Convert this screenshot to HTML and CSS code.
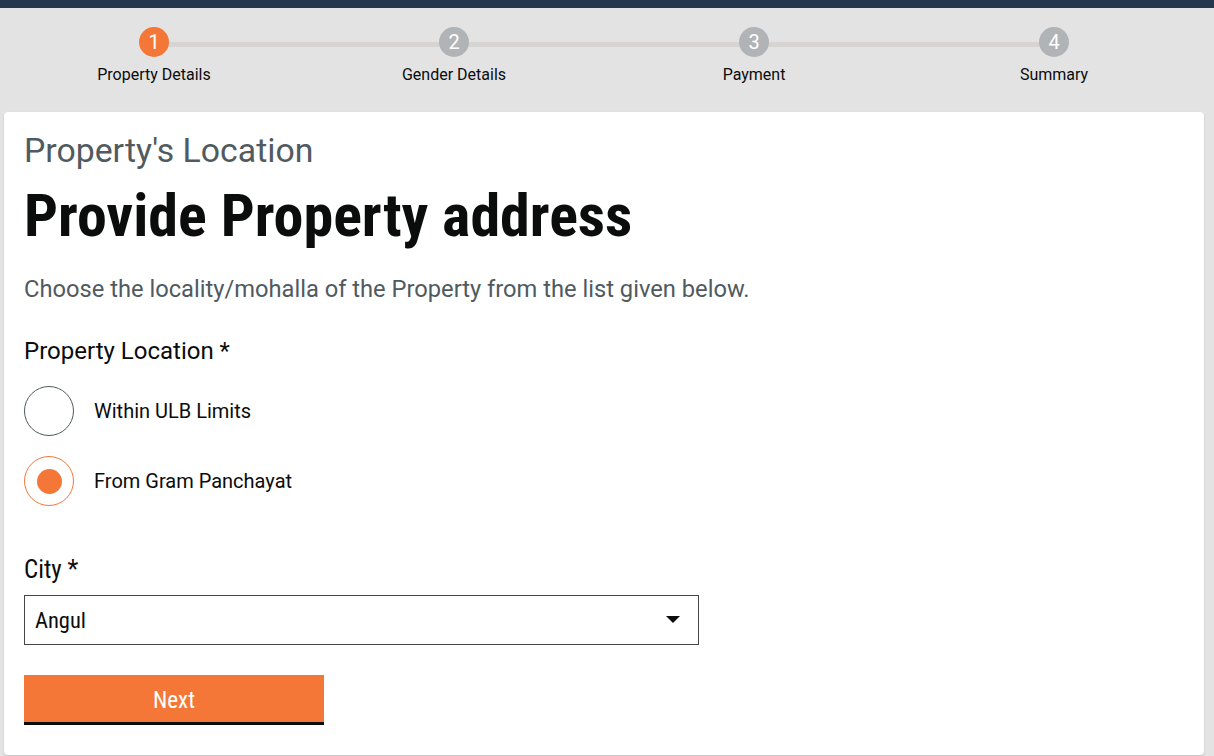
FILE: index.html
```html
<!DOCTYPE html>
<html lang="en">
<head>
<meta charset="utf-8">
<title>Property Details</title>
<link rel="stylesheet" href="styles.css">
</head>
<body>
<div class="topbar"></div>
<div class="page">
  <ol class="stepper">
    <li class="step active"><span class="dot">1</span><span class="step-label">Property Details</span></li>
    <li class="step"><span class="dot">2</span><span class="step-label">Gender Details</span></li>
    <li class="step"><span class="dot">3</span><span class="step-label">Payment</span></li>
    <li class="step last"><span class="dot">4</span><span class="step-label">Summary</span></li>
  </ol>
  <main class="card">
    <div class="caption">Property's Location</div>
    <h1 class="title">Provide Property address</h1>
    <p class="hint">Choose the locality/mohalla of the Property from the list given below.</p>
    <div class="field-label">Property Location *</div>
    <div class="radios">
      <label class="radio"><span class="circle"></span><span class="radio-text">Within ULB Limits</span></label>
      <label class="radio checked"><span class="circle"><span class="inner"></span></span><span class="radio-text">From Gram Panchayat</span></label>
    </div>
    <div class="field-label city">City *</div>
    <div class="select">
      <span class="select-value">Angul</span>
      <svg class="caret" width="14" height="7" viewBox="0 0 14 7"><path d="M0 0h14L7 7z" fill="#0b0c0c"/></svg>
    </div>
    <button class="btn">Next</button>
  </main>
</div>
</body>
</html>
```
FILE: styles.css
```css
* { box-sizing: border-box; }
html, body { margin: 0; padding: 0; }
body {
  background: #e3e3e3;
  font-family: Roboto, "Liberation Sans", sans-serif;
  color: #0b0c0c;
  width: 1214px;
  height: 756px;
  overflow: hidden;
}
.topbar { height: 8px; background: #22384d; }
.page { width: 1200px; margin-left: 4px; }
.stepper {
  list-style: none;
  margin: 0;
  padding: 19px 0 0;
  display: grid;
  grid-template-columns: repeat(4, 300px);
  height: 104px;
}
.step {
  position: relative;
  display: flex;
  flex-direction: column;
  align-items: center;
}
.step::after {
  content: "";
  position: absolute;
  top: 15px;
  left: 50%;
  width: 100%;
  height: 5px;
  background: #d6d5d3;
  z-index: 0;
}
.step.last::after { display: none; }
.dot {
  position: relative;
  z-index: 1;
  width: 30px;
  height: 30px;
  border-radius: 50%;
  background: #b1b4b6;
  color: #fff;
  font-size: 20px;
  line-height: 30px;
  text-align: center;
}
.step.active .dot { background: #f47738; }
.step-label {
  margin-top: 9px;
  font-size: 16px;
  line-height: 18px;
  color: #0b0c0c;
}
.card {
  background: #fff;
  border-radius: 4px;
  box-shadow: 0 1px 2px rgba(0,0,0,0.16);
  padding: 20px 20px 30px;
  height: 643px;
}
.caption {
  font-size: 33.8px;
  color: #505a5f;
  line-height: 37px;
}
.title {
  margin: 9px 0 0;
  font-family: "Roboto Condensed", "DejaVu Sans Condensed", sans-serif;
  font-weight: 700;
  font-size: 60px;
  line-height: 75px;
  color: #0b0c0c;
}
.hint {
  margin: 22px 0 0;
  font-size: 23.7px;
  line-height: 28px;
  color: #505a5f;
}
.field-label {
  margin-top: 34px;
  font-size: 24px;
  line-height: 28px;
  color: #0b0c0c;
}
.radios {
  margin-top: 21px;
  display: flex;
  flex-direction: column;
  gap: 20px;
}
.radio { display: flex; align-items: center; gap: 20px; }
.circle {
  width: 50px;
  height: 50px;
  border: 1px solid #505a5f;
  border-radius: 50%;
  display: flex;
  align-items: center;
  justify-content: center;
}
.radio.checked .circle { border-color: #f47738; }
.inner { width: 25px; height: 25px; border-radius: 50%; background: #f47738; }
.radio-text { font-size: 20px; color: #0b0c0c; }
.field-label.city {
  margin-top: 50px;
  font-size: 25px;
  font-family: "Roboto Condensed", "DejaVu Sans Condensed", sans-serif;
}
.select {
  margin-top: 11px;
  width: 675px;
  height: 50px;
  border: 1px solid #464646;
  display: flex;
  align-items: center;
  justify-content: space-between;
  padding: 0 18px 1px 10px;
}
.select-value {
  font-family: "Roboto Condensed", "DejaVu Sans Condensed", sans-serif;
  font-size: 22.5px;
}
.btn {
  display: block;
  margin-top: 30px;
  width: 300px;
  height: 50px;
  border: 0;
  border-bottom: 3px solid #0b0c0c;
  background: #f47738;
  color: #fff;
  font-family: "Roboto Condensed", "DejaVu Sans Condensed", sans-serif;
  font-size: 23px;
  padding: 3px 0 0;
}
```
